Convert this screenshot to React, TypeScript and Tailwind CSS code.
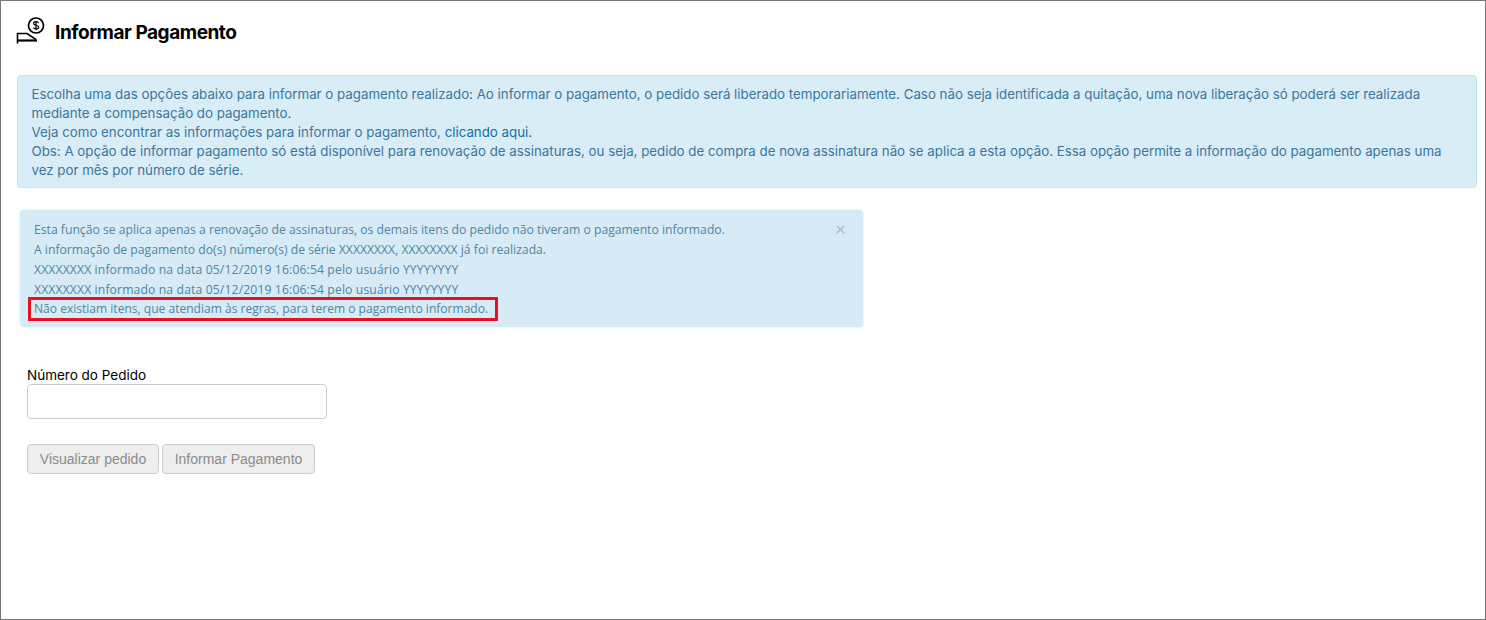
import React from 'react';
import { X } from 'lucide-react';

const PaymentIcon = () => (
  <svg width="30" height="30" viewBox="0 0 30 30" fill="none" stroke="#000" strokeWidth="1.5">
    <circle cx="20" cy="10.500" r="7.500" strokeWidth="1.700" />
    <path d="M20 5.800v9.400M22.600 8c-.5-.9-1.400-1.300-2.600-1.300-1.300 0-2.400.7-2.400 1.800 0 2.400 5.100 1.200 5.100 3.700 0 1.100-1.200 1.800-2.700 1.800-1.200 0-2.200-.5-2.600-1.400" strokeWidth="1.200" />
    <path d="M1.500 28.500v-10h9.500l9 6" strokeWidth="1.600" />
    <path d="M1.500 25.500h19.500" strokeWidth="2.200" />
  </svg>
);

export default function App() {
  return (
    <div className="h-[620px] w-[1486px] overflow-hidden border border-[#777777] bg-white font-['Inter',sans-serif]">
      <div className="flex h-[74px] items-start pl-[15px] pt-[14px]">
        <PaymentIcon />
        <h1 className="ml-[9px] mt-[5px] text-[19px] leading-[26px] font-bold tracking-[-0.45px] text-black">Informar Pagamento</h1>
      </div>

      <div className="ml-[16px] mr-[8px] h-[113px] rounded-[4px] border border-[#bce8f1] bg-[#d9edf7] pl-[13.500px] pr-[14px] pb-[8px] pt-[9px] text-[13.300px] leading-[19px] text-[#3a779b]">
        <p>Escolha uma das opções abaixo para informar o pagamento realizado: Ao informar o pagamento, o pedido será liberado temporariamente. Caso não seja identificada a quitação, uma nova liberação só poderá ser realizada mediante a compensação do pagamento.</p>
        <p>Veja como encontrar as informações para informar o pagamento, <a className="text-[#0b6fa8]">clicando aqui.</a></p>
        <p>Obs: A opção de informar pagamento só está disponível para renovação de assinaturas, ou seja, pedido de compra de nova assinatura não se aplica a esta opção. Essa opção permite a informação do pagamento apenas uma vez por mês por número de série.</p>
      </div>

      <div className="ml-[19px] mt-[22px] flex h-[117px] w-[843px] justify-between rounded-[4px] bg-[#d6ebf5] pl-[14px] pr-[16px] pt-[10px] font-['Open_Sans',sans-serif] text-[12.180px] leading-[20px] text-[#4f86a3] shadow-[0_0_2px_#c5dfea]">
        <div>
          <p>Esta função se aplica apenas a renovação de assinaturas, os demais itens do pedido não tiveram o pagamento informado.</p>
          <p>A informação de pagamento do(s) número(s) de série XXXXXXXX, XXXXXXXX já foi realizada.</p>
          <p className="tracking-[0.13px]">XXXXXXXX informado na data 05/12/2019 16:06:54 pelo usuário YYYYYYYY</p>
          <p className="tracking-[0.13px]">XXXXXXXX informado na data 05/12/2019 16:06:54 pelo usuário YYYYYYYY</p>
          <p className="-mx-[6px] -my-[3px] w-[470px] whitespace-nowrap border-[3px] border-[#e81123] px-[3px] text-[12.050px] leading-[18px]">Não existiam itens, que atendiam às regras, para terem o pagamento informado.</p>
        </div>
        <X size={13} strokeWidth={3} className="mt-[3px] text-[#a9bcc8]" />
      </div>

      <div className="ml-[26px] mt-[39px] w-[300px]">
        <label className="block text-[13.500px] leading-[18px] text-black">Número do Pedido</label>
        <input className="block h-[35px] w-full rounded-[4px] border border-[#ccc] bg-white" />
        <div className="mt-[25px] flex gap-[3px] font-['Liberation_Sans',sans-serif] text-[14px] text-[#8a8a8a]">
          <button className="h-[30px] w-[132px] rounded-[4px] border border-[#ccc] bg-[#eeeeee]">Visualizar pedido</button>
          <button className="h-[30px] w-[153px] rounded-[4px] border border-[#ccc] bg-[#eeeeee]">Informar Pagamento</button>
        </div>
      </div>
    </div>
  );
}
